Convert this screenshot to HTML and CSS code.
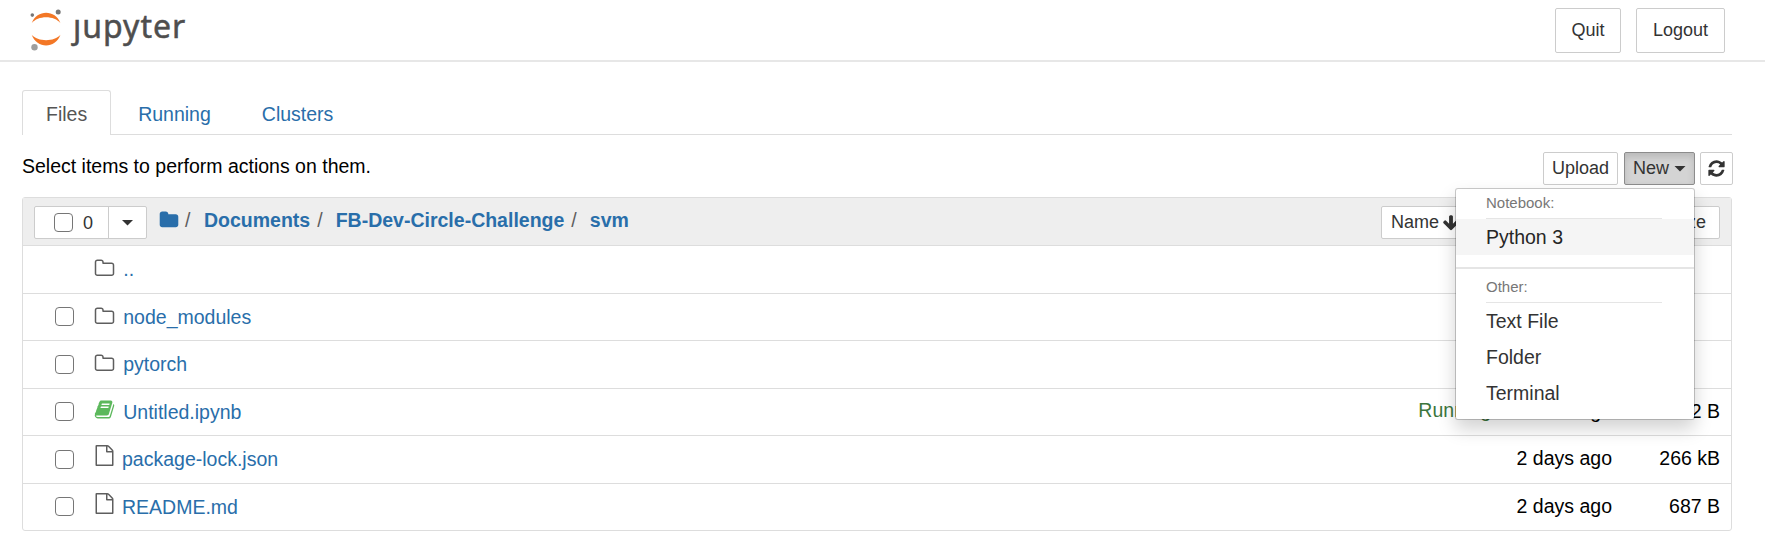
FILE: index.html
```html
<!DOCTYPE html>
<html lang="en">
<head>
<meta charset="utf-8">
<title>Home Page - Jupyter</title>
<link rel="stylesheet" href="styles.css">
</head>
<body>
<svg class="defs" width="0" height="0" aria-hidden="true">
  <symbol id="folder" viewBox="0 0 1792 1792"><path d="M1728 608v704q0 92-66 158t-158 66h-1216q-92 0-158-66t-66-158v-960q0-92 66-158t158-66h320q92 0 158 66t66 158v32h672q92 0 158 66t66 158z"/></symbol>
  <symbol id="folder-o" viewBox="0 0 1792 1792"><path d="M1600 1312v-704q0-40-28-68t-68-28h-704q-40 0-68-28t-28-68v-64q0-40-28-68t-68-28h-320q-40 0-68 28t-28 68v960q0 40 28 68t68 28h1216q40 0 68-28t28-68zm128-704v704q0 92-66 158t-158 66h-1216q-92 0-158-66t-66-158v-960q0-92 66-158t158-66h320q92 0 158 66t66 158v32h672q92 0 158 66t66 158z"/></symbol>
  <symbol id="file-o" viewBox="0 0 1792 1792"><path d="M1596 380q28 28 48 76t20 88v1152q0 40-28 68t-68 28h-1344q-40 0-68-28t-28-68v-1600q0-40 28-68t68-28h896q40 0 88 20t76 48zm-444-244v376h376q-10-29-22-41l-313-313q-12-12-41-22zm384 1528v-1024h-416q-40 0-68-28t-28-68v-416h-768v1536h1280z"/></symbol>
  <symbol id="book" viewBox="0 0 1792 1792"><path d="M1703 478q40 57 18 129l-275 906q-19 64-76.5 107.5t-122.5 43.5h-923q-77 0-148.5-53.5t-99.5-131.5q-24-67-2-127 0-4 3-27t4-37q1-8-3-21.5t-3-19.5q2-11 8-21t16.5-23.5 16.5-23.5q23-38 45-91.5t30-91.5q3-10 .5-30t-.5-28q3-11 17-28t17-23q21-36 42-92t25-90q1-9-2.5-32t.5-28q4-13 22-30.5t22-22.5q19-26 42.5-84.5t27.5-96.5q1-8-3-25.5t-2-26.5q2-8 9-18t18-23 17-21q8-12 16.5-30.5t15-35 16-36 19.5-32 26.5-23.5 36-11.5 47.5 5.5l-1 3q38-9 51-9h761q74 0 114 56t18 130l-274 906q-36 119-71.5 153.5t-128.5 34.5h-869q-27 0-38 15-11 16-1 43 24 70 144 70h923q29 0 56-15.5t35-41.5l300-987q7-22 5-57 38 15 59 43zm-1064 2q-4 13 2 22.5t20 9.5h608q13 0 25.5-9.5t16.5-22.5l21-64q4-13-2-22.5t-20-9.5h-608q-13 0-25.5 9.5t-16.5 22.5zm-83 256q-4 13 2 22.5t20 9.5h608q13 0 25.5-9.5t16.5-22.5l21-64q4-13-2-22.5t-20-9.5h-608q-13 0-25.5 9.5t-16.5 22.5z"/></symbol>
  <symbol id="refresh" viewBox="0 0 1792 1792"><path d="M1639 1056q0 5-1 7-64 268-268 434.5t-478 166.5q-146 0-282.5-55t-243.5-157l-129 129q-19 19-45 19t-45-19-19-45v-448q0-26 19-45t45-19h448q26 0 45 19t19 45-19 45l-137 137q71 66 161 102t187 36q134 0 250-65t186-179q11-17 53-117 8-23 30-23h192q13 0 22.5 9.5t9.5 22.5zm25-800v448q0 26-19 45t-45 19h-448q-26 0-45-19t-19-45 19-45l138-138q-148-137-349-137-134 0-250 65t-186 179q-11 17-53 117-8 23-30 23h-199q-13 0-22.5-9.5t-9.5-22.5v-7q65-268 270-434.5t480-166.5q146 0 284 55.5t245 156.5l130-129q19-19 45-19t45 19 19 45z"/></symbol>
  <symbol id="arrow-down" viewBox="0 0 1792 1792"><path d="M1675 832q0 53-37 90l-651 652q-39 37-91 37-53 0-90-37l-651-652q-38-36-38-90 0-53 38-91l74-75q39-37 91-37 53 0 90 37l294 294v-704q0-52 38-90t90-38h128q52 0 90 38t38 90v704l294-294q37-37 90-37 52 0 91 37l75 75q37 39 37 91z"/></symbol>
</svg>

<header class="header">
  <a class="logo">
    <svg class="logo-mark" width="36" height="46" viewBox="0 0 36 46">
      <path class="orange" d="M2.700 17.200C8 3.300 26.200 3.300 31.500 17.200C25.500 9.200 8.700 9.200 2.700 17.200Z"/>
      <path class="orange" d="M2.700 28.800C8 43 26.200 43 31.500 28.800C25.500 36 8.700 36 2.700 28.800Z"/>
      <circle class="moon" cx="3.300" cy="9.100" r="1.800"/>
      <circle class="moon" cx="29.200" cy="5.900" r="2.500"/>
      <circle class="moon light" cx="5.500" cy="41.300" r="3.200"/>
    </svg>
    <span class="logo-text">ȷupyter</span>
  </a>
  <nav class="session">
    <button class="btn btn-lg quit">Quit</button>
    <button class="btn btn-lg logout">Logout</button>
  </nav>
</header>

<main class="site">
  <ul class="tabs">
    <li class="tab active">Files</li>
    <li class="tab">Running</li>
    <li class="tab">Clusters</li>
  </ul>

  <div class="toolbar">
    <div class="hint">Select items to perform actions on them.</div>
    <div class="actions">
      <button class="btn upload">Upload</button>
      <div class="new">
        <button class="btn open">New <i class="caret"></i></button>
        <div class="menu">
          <div class="menu-head">Notebook:</div>
          <div class="item hover">Python 3</div>
          <div class="divider"></div>
          <div class="menu-head other">Other:</div>
          <div class="item">Text File</div>
          <div class="item">Folder</div>
          <div class="item">Terminal</div>
        </div>
      </div>
      <button class="btn refresh"><svg width="19" height="19"><use href="#refresh"/></svg></button>
    </div>
  </div>

  <section class="list">
    <div class="list-head">
      <div class="selector">
        <span class="select-all"><i class="check"></i>0</span>
        <span class="select-menu"><i class="caret"></i></span>
      </div>
      <div class="crumbs">
        <svg width="20" height="20"><use href="#folder"/></svg>
        <span class="sep first">/</span><a>Documents</a><span class="sep">/</span><a>FB-Dev-Circle-Challenge</a><span class="sep">/</span><a>svm</a>
      </div>
      <div class="sorts">
        <button class="btn">Name <svg width="18" height="18"><use href="#arrow-down"/></svg></button>
        <button class="btn sort-size">File size</button>
      </div>
    </div>
    <div class="row"><i class="check blank"></i><svg class="icon"><use href="#folder-o"/></svg><a class="name">..</a></div>
    <div class="row"><i class="check"></i><svg class="icon"><use href="#folder-o"/></svg><a class="name">node_modules</a></div>
    <div class="row"><i class="check"></i><svg class="icon"><use href="#folder-o"/></svg><a class="name">pytorch</a></div>
    <div class="row"><i class="check"></i><svg class="icon book"><use href="#book"/></svg><a class="name">Untitled.ipynb</a><span class="running">Running</span><span class="time">an hour ago</span><span class="size">72 B</span></div>
    <div class="row"><i class="check"></i><svg class="icon file"><use href="#file-o"/></svg><a class="name">package-lock.json</a><span class="time">2 days ago</span><span class="size">266 kB</span></div>
    <div class="row"><i class="check"></i><svg class="icon file"><use href="#file-o"/></svg><a class="name">README.md</a><span class="time">2 days ago</span><span class="size">687 B</span></div>
  </section>
</main>
</body>
</html>
```

FILE: styles.css
```css
* { box-sizing: border-box; }
body {
  margin: 0;
  background: #fff;
  color: #000;
  font-family: "Liberation Sans", Arial, sans-serif;
  font-size: 19.5px;
  line-height: 28px;
}
.defs { display: block; }
svg { flex: none; fill: currentColor; }

.header {
  display: flex;
  justify-content: space-between;
  height: 62px;
  padding: 0 40px 0 29px;
  border-bottom: 2px solid #e7e7e7;
}
.logo { display: flex; }
.logo-mark { margin-top: 6px; }
.orange { fill: #f37726; }
.moon { fill: #767677; }
.moon.light { fill: #9e9e9e; }
.logo-text {
  margin: 4px 0 0 8px;
  color: #4e4e4e;
  font-family: "Noto Sans", "Open Sans", sans-serif;
  font-size: 32px;
  letter-spacing: 1px;
  line-height: 43px;
  -webkit-text-stroke: .5px #4e4e4e;
}
.session { display: flex; gap: 15px; padding-top: 8px; }

.btn {
  display: flex;
  align-items: center;
  height: 33px;
  margin: 0;
  padding: 0 9px;
  border: 1px solid #ccc;
  border-radius: 2px;
  background: #fff;
  color: #333;
  font: 18px "Liberation Sans", Arial, sans-serif;
  white-space: nowrap;
}
.btn-lg { height: 45px; padding: 0 0 1px; justify-content: center; }
.quit { width: 66px; }
.logout { width: 89px; }
.caret {
  flex: none;
  width: 12px;
  height: 6px;
  background: #333;
  clip-path: polygon(0 0, 100% 0, 50% 100%);
}

.site { padding: 28px 32px 0 22px; }
.tabs {
  display: flex;
  gap: 3px;
  width: 1710px;
  height: 45px;
  margin: 0;
  padding: 0;
  border-bottom: 1px solid #ddd;
  list-style: none;
}
.tab {
  height: 44px;
  padding: 10px 24px 0;
  color: #296eaa;
}
.tab.active {
  height: 45px;
  padding: 9px 23px 0;
  border: 1px solid #ddd;
  border-bottom: 0;
  border-radius: 3px 3px 0 0;
  background: #fff;
  color: #555;
}

.toolbar { display: flex; justify-content: space-between; height: 62px; }
.hint { padding-top: 17px; }
.actions { display: flex; padding-top: 17px; }
.upload { width: 75px; margin-right: 6px; padding: 0; justify-content: center; }
.new { position: relative; margin-right: 5px; }
.open {
  gap: 5px;
  width: 71px;
  padding: 0 8px;
  border-color: #8c8c8c;
  background: #d4d4d4;
  box-shadow: inset 0 4px 7px rgba(0, 0, 0, .125);
}
.refresh { width: 33px; padding: 0; justify-content: center; }

.menu {
  position: absolute;
  z-index: 5;
  top: 36px;
  right: 0;
  width: 240px;
  height: 232px;
  padding: 7px 0;
  border: 1px solid #ccc;
  border-color: rgba(0, 0, 0, .2);
  border-radius: 3px;
  background: #fff;
  background-clip: padding-box;
  box-shadow: 0 9px 18px rgba(0, 0, 0, .175);
}
.menu-head {
  height: 23px;
  margin: 0 32px 0 30px;
  border-bottom: 1px solid #e5e5e5;
  color: #777;
  font-size: 15px;
  line-height: 14px;
}
.divider { height: 2px; margin: 12px 0 11px; background: #e5e5e5; }
.item { height: 36px; padding-left: 30px; color: #333; line-height: 36px; }
.item.hover { background: #f5f5f5; color: #262626; }

.list {
  width: 1710px;
  border: 1px solid #ddd;
  border-radius: 3px;
}
.list-head {
  display: flex;
  height: 48px;
  padding: 8px 11px 0;
  border-bottom: 1px solid #ddd;
  background: #eee;
}
.selector {
  display: flex;
  width: 113px;
  height: 33px;
  border: 1px solid #ccc;
  border-radius: 2px;
  background: #fff;
  color: #333;
  font-size: 18px;
}
.select-all {
  display: flex;
  gap: 10px;
  align-items: center;
  width: 74px;
  padding-left: 19px;
  border-right: 1px solid #ccc;
}
.select-menu { display: flex; flex: 1; align-items: center; justify-content: center; }
.check {
  flex: none;
  width: 19px;
  height: 19px;
  border: 1px solid #767676;
  border-radius: 4px;
  background: #fff;
}
.check.blank { visibility: hidden; }
.crumbs {
  display: flex;
  flex: 1;
  padding-left: 12px;
  color: #296eaa;
  font-weight: bold;
}
.crumbs svg { margin-top: 4px; }
.sep {
  width: 25.500px;
  padding-left: 7px;
  color: #5e5e5e;
  font-weight: normal;
}
.sep.first { width: 25px; padding-left: 6px; }
.sorts { display: flex; }
.sorts svg { margin-left: 3px; }
.sort-size { width: 96px; margin-left: 154px; justify-content: flex-end; padding-right: 13px; }

.row {
  display: flex;
  align-items: center;
  height: 47.5px;
  padding: 0 11px 0 32px;
  border-bottom: 1px solid #ddd;
}
.row:last-child { height: 46.5px; border-bottom: 0; }
.icon {
  width: 21px;
  height: 21px;
  margin: 0 8px 1px 20.250px;
  color: #5e5e5e;
}
.icon.file { margin: 0 7.500px 7px 19.500px; }
.icon.book { margin-bottom: 5px; color: #5cb85c; }
.name { flex: 1; color: #296eaa; }
.running { margin-right: -4px; padding-bottom: 3px; color: #3c763d; }
.time { width: 125px; padding-bottom: 2px; text-align: right; }
.size { width: 108px; padding-bottom: 2px; text-align: right; }
```
